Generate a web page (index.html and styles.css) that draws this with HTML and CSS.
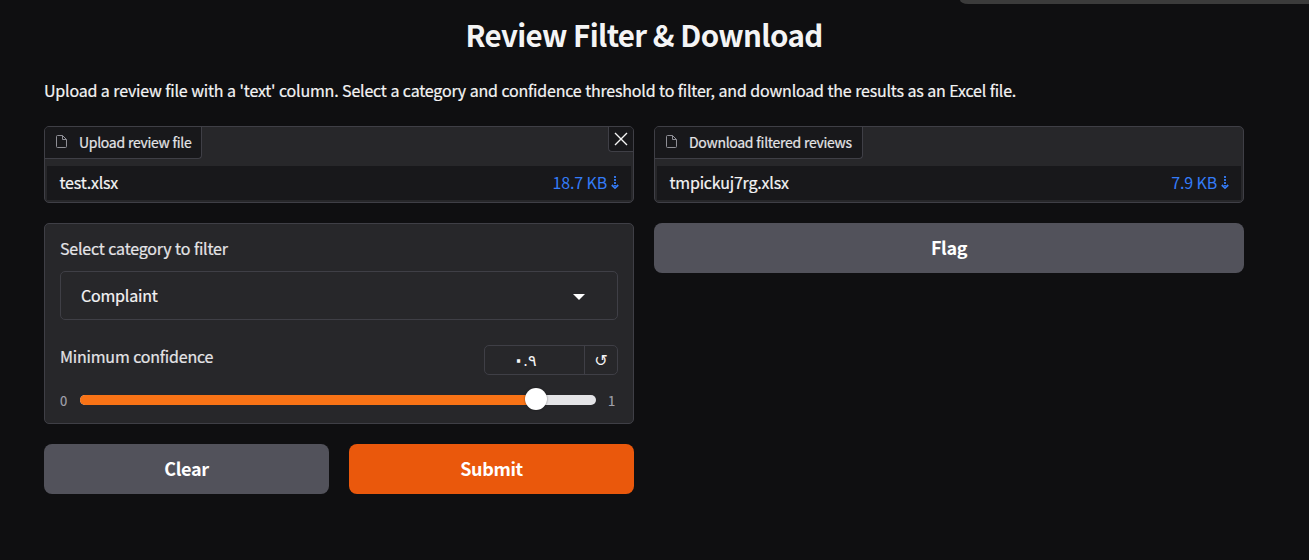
FILE: index.html
```html
<!DOCTYPE html>
<html lang="en">
<head>
<meta charset="utf-8">
<title>Review Filter &amp; Download</title>
<link rel="stylesheet" href="styles.css">
</head>
<body>
<div class="top-tab"></div>
<main class="app">
  <h1 class="title">Review Filter &amp; Download</h1>
  <p class="description">Upload a review file with a 'text' column. Select a category and confidence threshold to filter, and download the results as an Excel file.</p>
  <div class="columns">
    <section class="column">
      <div class="block file-block">
        <div class="file-head">
          <div class="file-label">
            <svg class="file-icon" viewBox="0 0 11 13"><path d="M6.5.5H1.5a1 1 0 0 0-1 1v10a1 1 0 0 0 1 1h8a1 1 0 0 0 1-1v-7z"/><path d="M6.5.5v4h4"/></svg>
            <span>Upload review file</span>
          </div>
          <button class="close" aria-label="Clear"><svg viewBox="0 0 14 14"><path d="M1 1l12 12M13 1L1 13"/></svg></button>
        </div>
        <div class="file-row"><span>test.xlsx</span><a class="size">18.7 KB<svg class="down" viewBox="0 0 8 14"><path class="dots" d="M4 0v10"/><path d="M.8 9L4 12.1 7.2 9"/></svg></a></div>
      </div>
      <div class="block form">
        <div class="field-label">Select category to filter</div>
        <div class="select"><span>Complaint</span><svg class="caret" viewBox="0 0 12 6"><path d="M0 0h12L6 6z"/></svg></div>
        <div class="slider-head">
          <div class="field-label">Minimum confidence</div>
          <div class="number-group"><bdo class="number" dir="ltr"><span class="zero">٠</span>.٩</bdo><button class="reset" aria-label="Reset">↺</button></div>
        </div>
        <div class="slider">
          <span class="bound">0</span>
          <div class="track"><div class="fill"></div><div class="thumb"></div></div>
          <span class="bound">1</span>
        </div>
      </div>
      <div class="actions">
        <button class="btn">Clear</button>
        <button class="btn primary">Submit</button>
      </div>
    </section>
    <section class="column">
      <div class="block file-block">
        <div class="file-head">
          <div class="file-label">
            <svg class="file-icon" viewBox="0 0 11 13"><path d="M6.5.5H1.5a1 1 0 0 0-1 1v10a1 1 0 0 0 1 1h8a1 1 0 0 0 1-1v-7z"/><path d="M6.5.5v4h4"/></svg>
            <span>Download filtered reviews</span>
          </div>
        </div>
        <div class="file-row"><span>tmpickuj7rg.xlsx</span><a class="size">7.9 KB<svg class="down" viewBox="0 0 8 14"><path class="dots" d="M4 0v10"/><path d="M.8 9L4 12.1 7.2 9"/></svg></a></div>
      </div>
      <button class="btn">Flag</button>
    </section>
  </div>
</main>
</body>
</html>
```
FILE: styles.css
```css
* { box-sizing: border-box; }
body {
  margin: 0;
  height: 560px;
  overflow: hidden;
  background: #0f0f11;
  color: #f4f4f5;
  font-family: "Noto Sans CJK SC", "DejaVu Sans", sans-serif;
  font-size: 16px;
  line-height: 24px;
  letter-spacing: -0.2px;
  word-spacing: .3px;
  -webkit-text-stroke: .2px currentColor;
}
button { font: inherit; color: inherit; border: 0; padding: 0; margin: 0; }
.top-tab {
  position: absolute;
  top: 0;
  right: 0;
  width: 349px;
  height: 4px;
  background: #3b3b3b;
  border-bottom-left-radius: 8px 4px;
}
.app { width: 1200px; margin-left: 44px; padding-top: 14px; }
.title { margin: 0; font-size: 29.5px; line-height: 40px; font-weight: 700; letter-spacing: -.66px; text-align: center; -webkit-text-stroke: 0; }
.description { margin: 24px 0 23px; line-height: 25px; white-space: nowrap; }
.columns { display: flex; gap: 20px; align-items: flex-start; }
.column { width: 590px; display: flex; flex-direction: column; gap: 20px; }
.block { background: #27272a; border: 1px solid #3f3f46; border-radius: 5px; overflow: hidden; }
.file-block { height: 77px; }
.file-head { display: flex; justify-content: space-between; align-items: flex-start; height: 39px; }
.file-label {
  display: flex;
  align-items: center;
  height: 32px;
  padding: 0 10px 1px 11px;
  gap: 12px;
  background: #18181b;
  border: solid #3f3f46;
  border-width: 0 1px 1px 0;
  border-bottom-right-radius: 4px;
  font-size: 14px;
  letter-spacing: -.3px;
  color: #e4e4e7;
}
.file-icon { width: 11px; height: 13px; margin-top: -1px; fill: none; stroke: #8f8f96; stroke-width: 1; }
.close {
  display: flex;
  align-items: center;
  justify-content: center;
  width: 25px;
  height: 25px;
  background: #18181b;
  border: solid #3f3f46;
  border-width: 0 0 1px 1px;
  border-bottom-left-radius: 4px;
}
.close svg { width: 14px; height: 14px; fill: none; stroke: #f4f4f5; stroke-width: 1.4; }
.file-row {
  display: flex;
  justify-content: space-between;
  align-items: center;
  height: 34px;
  margin: 0 2px;
  padding: 0 12px 2px 12.5px;
  background: #18181b;
}
.size { display: flex; align-items: center; gap: 4px; color: #347cf8; -webkit-text-stroke: 0; }
.down { width: 8px; height: 14px; margin-top: 1px; fill: none; stroke: currentColor; stroke-width: 1.8; }
.dots { stroke-dasharray: 2 1; }
.form { height: 201px; padding: 12px 15px 0; }
.field-label { color: #e4e4e7; line-height: 26px; margin-top: -1px; }
.select {
  display: flex;
  align-items: center;
  justify-content: space-between;
  height: 49px;
  margin-top: 10px;
  padding: 0 32px 0 20px;
  border: 1px solid #3f3f46;
  border-radius: 5px;
}
.select span { margin-top: -2px; }
.caret { width: 12px; height: 6px; margin-top: 2px; fill: #fff; }
.slider-head { display: flex; justify-content: space-between; align-items: flex-start; height: 30px; margin-top: 25px; }
.slider-head .field-label { margin-top: -2px; }
.number-group { display: flex; width: 134px; height: 30px; border: 1px solid #3f3f46; border-radius: 5px; }
.number { width: 99px; padding-right: 18px; text-align: center; line-height: 30px; font-family: "DejaVu Sans", sans-serif; font-size: 16px; letter-spacing: -1.2px; -webkit-text-stroke: 0; }
.zero { -webkit-text-stroke: 1.4px currentColor; }
.reset { flex: 1; background: none; border-left: 1px solid #3f3f46; font-family: "DejaVu Sans", sans-serif; font-size: 16px; line-height: 30px; -webkit-text-stroke: 0; }
.slider { display: flex; align-items: center; height: 20px; margin-top: 15px; }
.bound { width: 20px; padding-top: 2px; font-size: 13px; color: #a1a1aa; }
.bound:last-child { width: 22px; padding-left: 12px; }
.track { position: relative; flex: 1; height: 10px; border-radius: 5px; background: #e4e4e7; }
.fill { width: 456px; height: 10px; border-radius: 5px 0 0 5px; background: #f97316; }
.thumb {
  position: absolute;
  left: 445px;
  top: -7px;
  width: 22px;
  height: 22px;
  border-radius: 50%;
  background: #fff;
  box-shadow: 0 0 2px rgba(0, 0, 0, .5);
}
.actions { display: flex; gap: 20px; }
.btn { height: 50px; padding-bottom: 2px; border-radius: 8px; background: #52525b; color: #fff; font-size: 18px; font-weight: 700; letter-spacing: -.35px; line-height: 48px; -webkit-text-stroke: 0; }
.actions .btn { flex: 1; }
.primary { background: #ea580c; }
```
